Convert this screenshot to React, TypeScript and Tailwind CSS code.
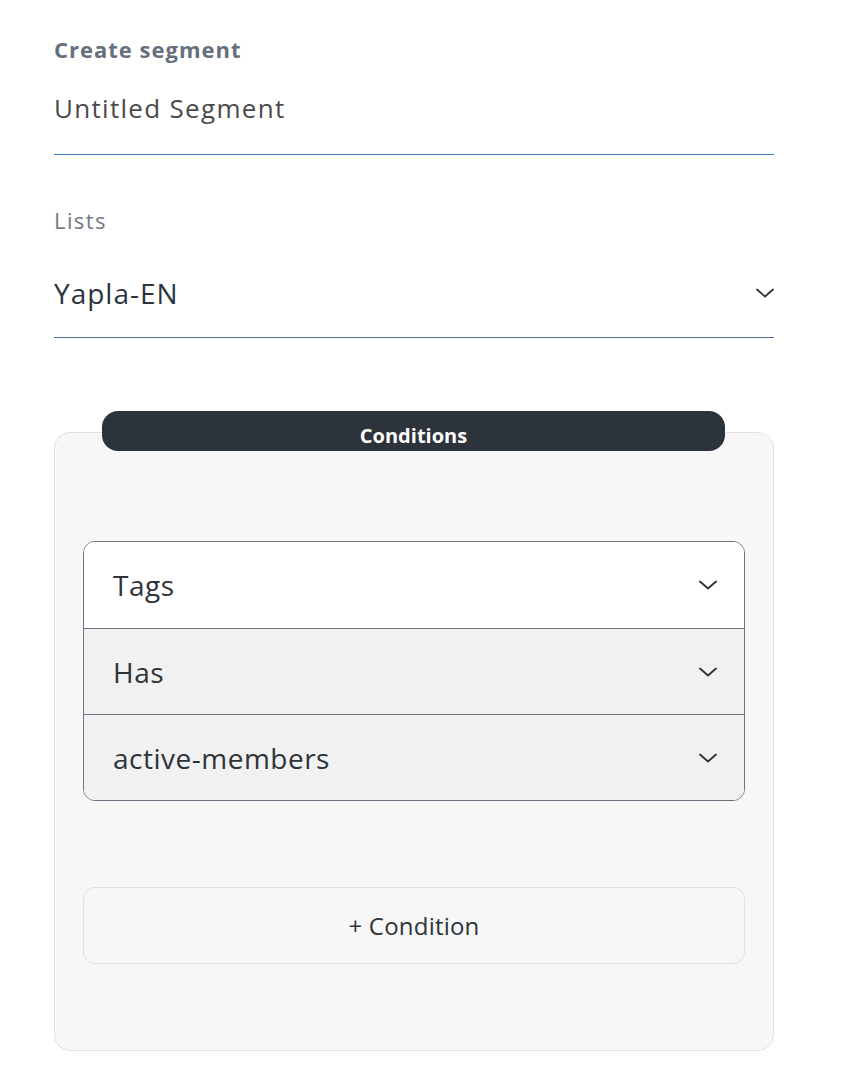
function Chevron({ className }: { className?: string }) {
  return (
    <svg viewBox="0 0 18 10" className={className} fill="none" stroke="currentColor" strokeWidth="1.8" strokeLinecap="round" strokeLinejoin="round">
      <path d="M1 1.5 9 8.5 17 1.5" />
    </svg>
  );
}

const rows = [
  { label: "Tags", bg: "bg-white" },
  { label: "Has", bg: "bg-[#f1f1f1]" },
  { label: "active-members", bg: "bg-[#f1f1f1]" },
];

export default function App() {
  return (
    <div className="min-h-[1092px] w-full bg-white font-['Open_Sans','Noto_Sans',sans-serif]">
      <div className="ml-[54px] w-[720px] flex flex-col pb-[42px]">
        <h1 className="mt-[35px] h-[28px] leading-[28px] text-[22px] tracking-[1px] font-bold text-[#66707c]">
          Create segment
        </h1>
        <div className="h-[92px] flex items-center border-b border-[#3b7bbf] text-[26px] tracking-[1.3px] text-[#4a4a4a]">
          Untitled Segment
        </div>

        <label className="mt-[50px] h-[30px] leading-[30px] text-[22px] tracking-[1.4px] text-[#727a85]">Lists</label>
        <div className="flex items-center justify-between pt-[40px] pb-[26px] border-b border-[#4e6f95]">
          <span className="h-[36px] leading-[36px] text-[28px] tracking-[1px] text-[#2d333a]">Yapla-EN</span>
          <Chevron className="w-[18px] h-[10px] text-[#2d333a]" />
        </div>

        <div className="relative mt-[94px] h-[619px] rounded-[16px] border border-[#e2e2e2] bg-[#f7f7f7] px-[28px] pt-[108px]">
          <div className="absolute -top-[22px] left-[47px] right-[48px] h-[40px] rounded-[16px] bg-[#2d333b] flex items-center justify-center pt-[10px] text-[20px] font-bold text-white">
            Conditions
          </div>

          <div className="flex flex-col rounded-[12px] border border-[#6b7480] overflow-hidden">
            {rows.map((r, i) => (
              <div
                key={r.label}
                className={`flex items-center justify-between h-[86px] pl-[29px] pr-[27px] ${r.bg} ${i > 0 ? "border-t border-[#6b7480]" : ""}`}
              >
                <span className="text-[28px] tracking-[0.5px] text-[#2d333a]">{r.label}</span>
                <Chevron className="w-[18px] h-[10px] text-[#2d333a]" />
              </div>
            ))}
          </div>

          <button className="mt-[86px] w-full h-[77px] rounded-[12px] border border-[#e0e0e0] bg-[#f7f7f7] text-[24px] tracking-[0.2px] text-[#2d333a]">
            + Condition
          </button>
        </div>
      </div>
    </div>
  );
}
